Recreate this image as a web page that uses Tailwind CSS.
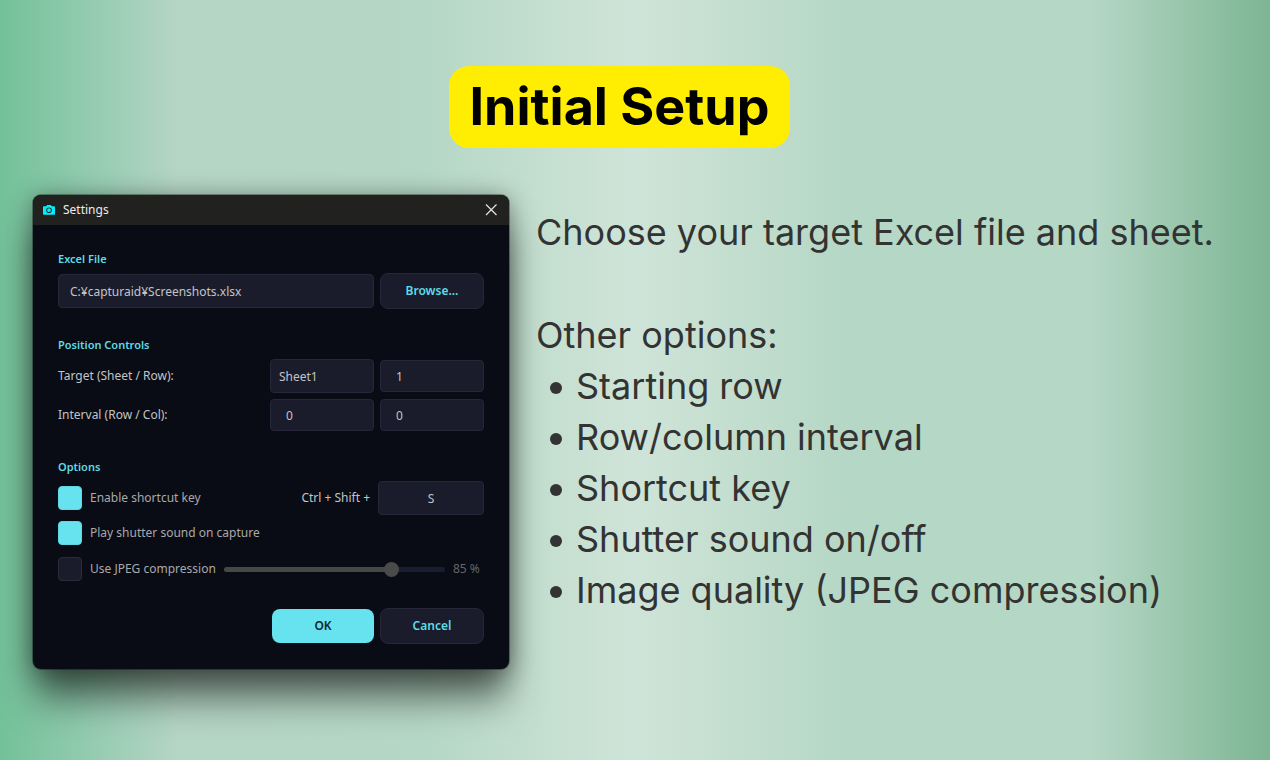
<!DOCTYPE html>
<html lang="en">
<head>
<meta charset="utf-8">
<meta name="viewport" content="width=device-width, initial-scale=1">
<title>Initial Setup</title>
<script src="https://cdn.jsdelivr.net/npm/@tailwindcss/browser@4"></script>
</head>
<body class="min-h-screen bg-[linear-gradient(90deg,#72c199_0%,#b5d5c5_14%,#b5d7c5_33%,#cfe4d8_50%,#b5d7c5_67%,#b5d7c5_86%,#7db593_100%)] pr-8 pl-[33px] pt-[66px] font-['Inter',sans-serif]">
  <header class="flex justify-center pr-8">
    <h1 class="rounded-[20px] bg-[#ffee02] px-5 text-[52px] leading-[82px] font-bold text-black">Initial Setup</h1>
  </header>

  <main class="mt-[47px] flex items-start gap-[27px]">
    <form class="w-[476px] shrink-0 overflow-hidden rounded-lg bg-[#090c15] font-['Noto_Sans',sans-serif] text-[12px] leading-[18px] text-[#c4c4c6] shadow-[0_0_0_1px_#00000050,0_2px_24px_#00000068,0_32px_36px_-3px_#00000088]">
      <div class="flex h-[30px] items-center bg-[#212120] pr-3 pl-[10px]">
        <svg class="h-3 w-3" viewBox="0 0 12 12" aria-hidden="true"><path fill="#00eefc" fill-rule="evenodd" d="M.8 2.200h2.400L4.200 1h3.600l1 1.200h2.400a.8.800 0 0 1 .8.800v7a.8.800 0 0 1-.8.800H.8A.8.800 0 0 1 0 10V3a.8.800 0 0 1 .8-.8zM6 3.400a2.800 2.800 0 1 0 0 5.600 2.800 2.800 0 0 0 0-5.600zm0 .9a1.900 1.900 0 1 1 0 3.800 1.900 1.900 0 0 1 0-3.800z"/></svg>
        <h2 class="ml-2 text-[#ececec]">Settings</h2>
        <button type="button" aria-label="Close" class="ml-auto"><svg class="h-3 w-3" viewBox="0 0 12 12" fill="none" stroke="#e4e4e4" stroke-width="1.2"><path d="M1 .5l10.500 10.500M11.500.5L1 11"/></svg></button>
      </div>

      <div class="px-[25px] py-[25px]">
        <label for="file" class="block text-[11px] font-semibold text-[#5fdbe6]">Excel File</label>
        <div class="mt-[5px] flex items-center gap-[6px]">
          <input id="file" type="text" value="C:¥capturaid¥Screenshots.xlsx" class="h-[34px] min-w-0 flex-1 rounded border border-[#26283a] bg-[#1a1c2c] px-[11px]">
          <button type="button" class="h-9 w-[104px] rounded-lg border border-[#26283a] bg-[#1a1c2c] font-semibold text-[#5fdbe6]">Browse...</button>
        </div>

        <h3 class="mt-[27px] text-[11px] font-semibold text-[#5fdbe6]">Position Controls</h3>
        <div class="mt-[5px] flex items-center gap-[6px]">
          <label for="sheet" class="flex-1">Target (Sheet / Row):</label>
          <input id="sheet" type="text" value="Sheet1" class="h-[34px] w-[104px] rounded border border-[#26283a] bg-[#1a1c2c] px-2">
          <input type="text" inputmode="numeric" aria-label="Target row" value="1" class="h-8 w-[104px] rounded border border-[#26283a] bg-[#1a1c2c] px-[15px]">
        </div>
        <div class="mt-[6px] flex items-center gap-[6px]">
          <label for="interval" class="flex-1">Interval (Row / Col):</label>
          <input id="interval" type="text" inputmode="numeric" value="0" class="h-8 w-[104px] rounded border border-[#26283a] bg-[#1a1c2c] px-[15px]">
          <input type="text" inputmode="numeric" aria-label="Column interval" value="0" class="h-8 w-[104px] rounded border border-[#26283a] bg-[#1a1c2c] px-[15px]">
        </div>

        <h3 class="mt-[27px] text-[11px] font-semibold text-[#5fdbe6]">Options</h3>
        <div class="mt-[5px] flex items-center gap-2">
          <input id="shortcut" type="checkbox" checked class="h-6 w-6 appearance-none rounded border border-[#2a2c3e] bg-[#1a1c2c] checked:border-[#5fd6e2] checked:bg-[#67e3ef]">
          <label for="shortcut" class="flex-1 text-[#a9a9ab]">Enable shortcut key</label>
          <label for="key">Ctrl + Shift +</label>
          <input id="key" type="text" value="S" class="h-[34px] w-[106px] rounded border border-[#26283a] bg-[#1a1c2c] text-center">
        </div>
        <div class="mt-[6px] flex items-center gap-2">
          <input id="sound" type="checkbox" checked class="h-6 w-6 appearance-none rounded border border-[#2a2c3e] bg-[#1a1c2c] checked:border-[#5fd6e2] checked:bg-[#67e3ef]">
          <label for="sound" class="text-[#a9a9ab]">Play shutter sound on capture</label>
        </div>
        <div class="mt-3 flex items-center gap-2">
          <input id="jpeg" type="checkbox" class="h-6 w-6 appearance-none rounded border border-[#2a2c3e] bg-[#1a1c2c] checked:border-[#5fd6e2] checked:bg-[#67e3ef]">
          <label for="jpeg" class="text-[#a9a9ab]">Use JPEG compression</label>
          <input type="range" aria-label="JPEG quality" min="33" max="100" value="85" class="h-[5px] min-w-0 flex-1 appearance-none rounded-full bg-[linear-gradient(90deg,#474747_76%,#1a1c2f_76%)] [&::-webkit-slider-thumb]:h-[15px] [&::-webkit-slider-thumb]:w-[15px] [&::-webkit-slider-thumb]:appearance-none [&::-webkit-slider-thumb]:rounded-full [&::-webkit-slider-thumb]:bg-[#4a4a4a]">
          <output class="w-[31px] whitespace-nowrap text-[#666668]">85 %</output>
        </div>

        <div class="mt-[27px] flex items-center justify-end gap-[6px]">
          <button type="submit" class="h-[34px] w-[102px] rounded-lg bg-[#67e3ef] font-semibold text-[#10262c]">OK</button>
          <button type="button" class="h-9 w-[104px] rounded-lg border border-[#26283a] bg-[#1a1c2c] font-semibold text-[#5fdbe6]">Cancel</button>
        </div>
      </div>
    </form>

    <section class="min-w-0 flex-1 pt-3 text-[36px] leading-[51px] text-[#333333]">
      <p>Choose your target Excel file and sheet.</p>
      <p class="mt-[52px]">Other options:</p>
      <ul>
        <li class="flex items-center before:mx-[14px] before:mt-[2px] before:size-3 before:shrink-0 before:rounded-full before:bg-[#333333]">Starting row</li>
        <li class="flex items-center before:mx-[14px] before:mt-[2px] before:size-3 before:shrink-0 before:rounded-full before:bg-[#333333]">Row/column interval</li>
        <li class="flex items-center before:mx-[14px] before:mt-[2px] before:size-3 before:shrink-0 before:rounded-full before:bg-[#333333]">Shortcut key</li>
        <li class="flex items-center before:mx-[14px] before:mt-[2px] before:size-3 before:shrink-0 before:rounded-full before:bg-[#333333]">Shutter sound on/off</li>
        <li class="flex items-center before:mx-[14px] before:mt-[2px] before:size-3 before:shrink-0 before:rounded-full before:bg-[#333333]">Image quality (JPEG compression)</li>
      </ul>
    </section>
  </main>
</body>
</html>
